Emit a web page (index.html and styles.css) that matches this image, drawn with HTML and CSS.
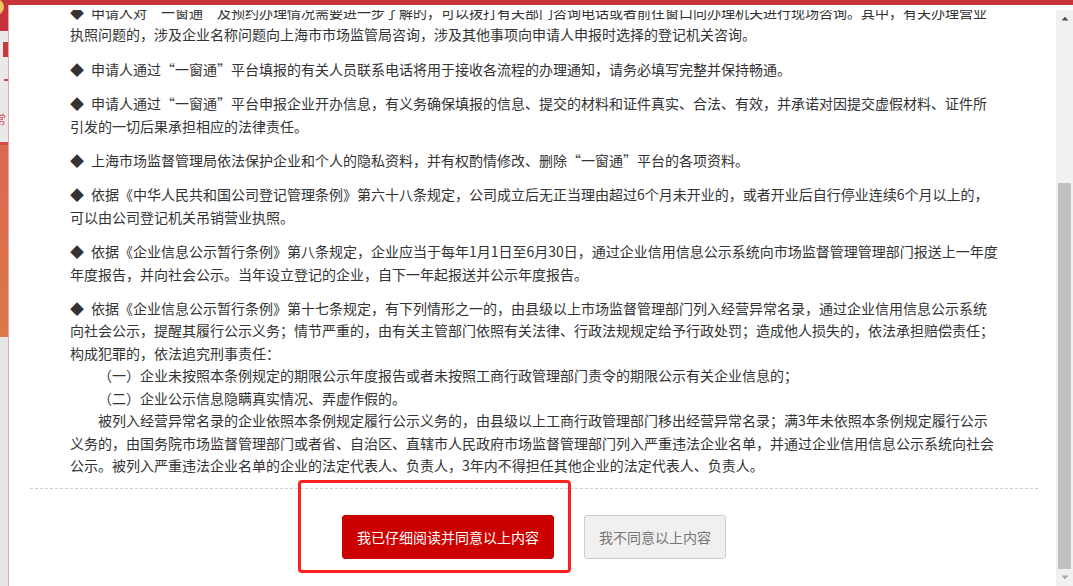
FILE: index.html
```html
<!DOCTYPE html>
<html lang="zh-CN">
<head>
<meta charset="utf-8">
<title>一窗通 用户须知</title>
<link rel="stylesheet" href="styles.css">
</head>
<body>
<div class="site">
  <header class="site-header"><span class="site-logo"></span></header>
  <nav class="site-nav">
    <div class="nav-tab"></div>
    <div class="nav-dash"></div>
    <div class="nav-link">常</div>
  </nav>
  <div class="site-banner"></div>
  <div class="site-body"></div>
</div>

<div class="dialog">
  <div class="dialog-view">
    <div class="terms">
      <div class="term">
        <p><span class="bullet">◆</span>申请人对“一窗通”及预约办理情况需要进一步了解的，可以拨打有关部门咨询电话或者前往窗口向办理机关进行现场咨询。其中，有关办理营业<br>执照问题的，涉及企业名称问题向上海市市场监管局咨询，涉及其他事项向申请人申报时选择的登记机关咨询。</p>
      </div>
      <div class="term">
        <p><span class="bullet">◆</span>申请人通过“一窗通”平台填报的有关人员联系电话将用于接收各流程的办理通知，请务必填写完整并保持畅通。</p>
      </div>
      <div class="term">
        <p><span class="bullet">◆</span>申请人通过“一窗通”平台申报企业开办信息，有义务确保填报的信息、提交的材料和证件真实、合法、有效，并承诺对因提交虚假材料、证件所<br>引发的一切后果承担相应的法律责任。</p>
      </div>
      <div class="term">
        <p><span class="bullet">◆</span>上海市场监督管理局依法保护企业和个人的隐私资料，并有权酌情修改、删除“一窗通”平台的各项资料。</p>
      </div>
      <div class="term">
        <p><span class="bullet">◆</span>依据《中华人民共和国公司登记管理条例》第六十八条规定，公司成立后无正当理由超过6个月未开业的，或者开业后自行停业连续6个月以上的，<br>可以由公司登记机关吊销营业执照。</p>
      </div>
      <div class="term">
        <p><span class="bullet">◆</span>依据《企业信息公示暂行条例》第八条规定，企业应当于每年1月1日至6月30日，通过企业信用信息公示系统向市场监督管理管理部门报送上一年度<br>年度报告，并向社会公示。当年设立登记的企业，自下一年起报送并公示年度报告。</p>
      </div>
      <div class="term">
        <p><span class="bullet">◆</span>依据《企业信息公示暂行条例》第十七条规定，有下列情形之一的，由县级以上市场监督管理部门列入经营异常名录，通过企业信用信息公示系统<br>向社会公示，提醒其履行公示义务；情节严重的，由有关主管部门依照有关法律、行政法规规定给予行政处罚；造成他人损失的，依法承担赔偿责任；<br>构成犯罪的，依法追究刑事责任：</p>
        <p class="sub">（一）企业未按照本条例规定的期限公示年度报告或者未按照工商行政管理部门责令的期限公示有关企业信息的；</p>
        <p class="sub">（二）企业公示信息隐瞒真实情况、弄虚作假的。</p>
        <p class="sub">被列入经营异常名录的企业依照本条例规定履行公示义务的，由县级以上工商行政管理部门移出经营异常名录；满3年未依照本条例规定履行公示<br>义务的，由国务院市场监督管理部门或者省、自治区、直辖市人民政府市场监督管理部门列入严重违法企业名单，并通过企业信用信息公示系统向社会<br>公示。被列入严重违法企业名单的企业的法定代表人、负责人，3年内不得担任其他企业的法定代表人、负责人。</p>
      </div>
      <div class="actions">
        <span class="mark"><button class="btn btn-agree" type="button">我已仔细阅读并同意以上内容</button></span>
        <button class="btn btn-decline" type="button">我不同意以上内容</button>
      </div>
    </div>
  </div>
  <div class="scrollbar">
    <div class="sb-btn"><svg width="8" height="5" viewBox="0 0 8 5"><path d="M0.5 4.5 L4 0.8 L7.5 4.5 Z" fill="#505050"/></svg></div>
    <div class="sb-track"><div class="sb-thumb"></div></div>
    <div class="sb-btn"><svg width="8" height="5" viewBox="0 0 8 5"><path d="M0.5 0.5 L4 4.2 L7.5 0.5 Z" fill="#a3a3a3"/></svg></div>
  </div>
</div>
</body>
</html>
```

FILE: styles.css
```css
html, body {
  margin: 0;
  height: 100%;
}

body {
  font-family: "Noto Sans CJK SC", "Liberation Sans", sans-serif;
  background: #e6e6e6;
  overflow: hidden;
}

/* background page behind the dialog */
.site {
  height: 100%;
  display: flex;
  flex-direction: column;
}

.site-header {
  height: 31px;
  flex: none;
  background: #c6333a;
  display: flex;
  align-items: flex-start;
}

.site-logo {
  width: 16px;
  height: 16px;
  margin: -1px 0 0 -12px;
  border-radius: 50%;
  background: radial-gradient(circle at 65% 45%, #f2d46e, #d8a33c);
}

.site-nav {
  flex: none;
  height: 100px;
  padding-top: 11px;
  background: #e9e9e9;
  border-bottom: 3px solid #d24a4b;
}

.nav-tab {
  width: 30px;
  height: 15px;
  margin-left: 3px;
  background: #c9383c;
}

.nav-dash {
  width: 20px;
  height: 2px;
  margin: 22px 0 0 4px;
  background: #d04545;
}

.nav-link {
  margin: 30px 0 0 -7px;
  font-size: 13px;
  line-height: 16px;
  color: #d35353;
}

.site-banner {
  flex: none;
  height: 192px;
  background: linear-gradient(165deg, #d9694f 0%, #de7848 45%, #e48d38 100%);
}

.site-body {
  flex: 1;
  background: #e5e5e5;
}

/* dialog */
.dialog {
  position: fixed;
  top: 5px;
  left: 8px;
  right: 0;
  bottom: 0;
  background: #fff;
  border-left: 1px solid #e7a9a9;
  padding-top: 5px;
  box-sizing: border-box;
  display: flex;
}

.dialog-view {
  flex: 1;
  overflow: hidden;
}

.terms {
  margin-top: -9px;
  padding: 0 0 0 61px;
  color: #333;
  font-size: 14px;
  line-height: 22.4px;
}

.term {
  margin: 0 40px 12px 0;
}

.term:last-of-type {
  margin-bottom: 0;
}

.term p {
  margin: 0;
  white-space: nowrap;
}

.bullet {
  display: inline-block;
  width: 21px;
}

.term .sub {
  text-indent: 28px;
}

.actions {
  margin: 10px 18px 0 -40px;
  border-top: 1px dashed #cfcfcf;
  padding: 26px 0 27px;
  display: flex;
  justify-content: center;
  gap: 30px;
}

.btn {
  height: 44px;
  padding: 0 14px;
  border: 1px solid;
  border-radius: 3px;
  font-family: inherit;
  font-size: 14px;
  line-height: 20px;
  box-sizing: border-box;
  cursor: pointer;
}

.btn-agree {
  background: #cc0000;
  border-color: #cc0000;
  color: #fff;
}

.btn-decline {
  background: #f0f0f0;
  border-color: #cccccc;
  color: #777;
}

.mark {
  position: relative;
  display: flex;
}

.mark::after {
  content: "";
  position: absolute;
  left: -44px;
  top: -35px;
  right: -17px;
  bottom: -14px;
  border: 3px solid #ff2121;
  border-radius: 4px;
  pointer-events: none;
}

/* scrollbar */
.scrollbar {
  width: 17px;
  background: #f1f1f1;
  display: flex;
  flex-direction: column;
}

.sb-btn {
  height: 17px;
  display: flex;
  align-items: center;
  justify-content: center;
}

.sb-track {
  flex: 1;
  display: flex;
  flex-direction: column;
  justify-content: flex-end;
  padding: 0 2px;
}

.sb-thumb {
  height: 386px;
  background: #c1c1c1;
}
```
